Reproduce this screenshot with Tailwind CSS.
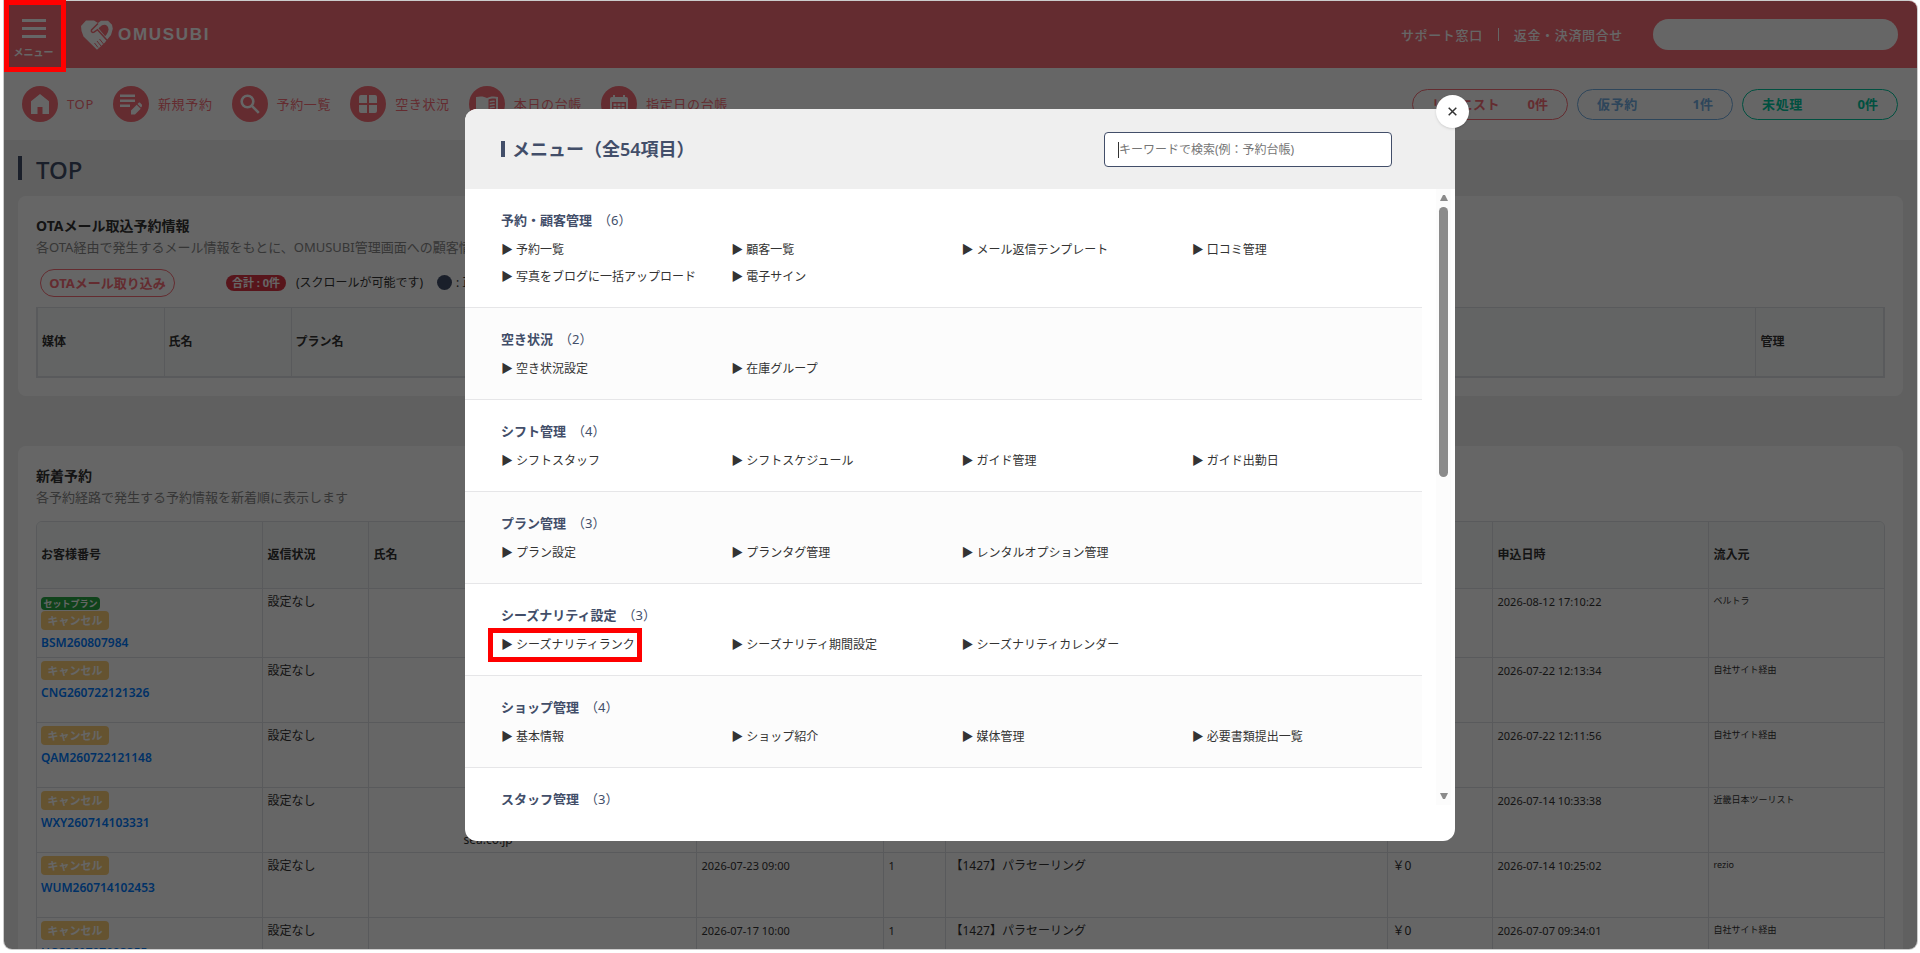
<!DOCTYPE html>
<html lang="ja">
  <head>
    <meta charset="utf-8" />
    <meta name="viewport" content="width=device-width, initial-scale=1" />
    <title>OMUSUBI | TOP</title>
    <script src="https://cdn.jsdelivr.net/npm/@tailwindcss/browser@4"></script>
  </head>
  <body
    class="h-screen overflow-hidden bg-white pt-px pr-[3px] pb-[4px] pl-[4px] font-['Noto_Sans','Noto_Sans_CJK_JP',sans-serif] text-[12px] leading-[18px] text-[#333]"
  >
    <div class="relative h-full overflow-hidden rounded-lg rounded-tl-none bg-[#f0f0f0] ring-1 ring-[#ccc]">
      <!-- header -->
      <header class="flex h-[67px] items-center bg-[#fa6e78] pr-[19px] text-white">
        <button type="button" class="flex w-[59px] flex-col items-center gap-[6px] pt-[8px]">
          <svg class="h-[20px] w-[24px]" viewBox="0 0 24 20" fill="currentColor">
            <path d="M0 0h24v3H0zM0 8h24v3H0zM0 16h24v3H0z" />
          </svg>
          <span class="text-[10px] leading-[14px] font-bold">メニュー</span>
        </button>
        <a href="#" class="ml-[18px] flex items-center gap-[5px]">
          <svg class="h-[30px] w-[32px]" viewBox="0 0 32 30" fill="none">
            <path
              fill="currentColor"
              d="M5 .5h8l4 2.500L20 .8h7l4 4 .8 4-1.800 6.200L25 21l-1 1.500L16 29.800 2.500 16.500.5 11 0 6z"
            />
            <path stroke="#fa6e78" stroke-width="1.500" d="M17 3.500 10.500 10c-.8 1.500 1 3.200 2.500 2.200l3.500-2.500 9.500 10.500" />
            <path fill="#fa6e78" d="M17.500 8.300 21 5.300c3-1.800 6.500.2 6.500 4 0 2.500-1.300 4.700-3.300 7z" />
            <path stroke="#fa6e78" stroke-width="1" d="m13.500 23 3.500 4.500M16 21l4 5M18.500 19l4 5" />
          </svg>
          <span class="font-['Liberation_Sans',sans-serif] text-[17px] leading-[20px] font-bold tracking-widest">OMUSUBI</span>
        </a>
        <nav class="ml-auto flex items-center text-[13px] font-medium tracking-wider">
          <a href="#">サポート窓口</a>
          <span class="mx-[15px] h-[13px] w-px bg-white"></span>
          <a href="#">返金・決済問合せ</a>
        </nav>
        <input type="search" aria-label="検索" class="ml-[30px] h-[31px] w-[245px] rounded-full bg-white px-4 text-[#333]" />
      </header>

      <!-- shortcuts -->
      <div class="flex h-[72px] items-center bg-white pr-[19px] pl-[18px] text-[13px] tracking-wider text-[#fa6e78]">
        <nav class="flex items-center gap-[19px]">
          <a href="#" class="flex items-center gap-[9px]">
            <span class="grid size-[36px] place-items-center rounded-full bg-[#fa6e78] text-white">
              <svg class="size-[20px]" viewBox="0 0 20 20" fill="currentColor">
                <path d="M10 0 1 7.300V20h6.500v-7h5v7H19V7.300z" />
              </svg>
            </span>
            TOP
          </a>
          <a href="#" class="flex items-center gap-[9px]">
            <span class="grid size-[36px] place-items-center rounded-full bg-[#fa6e78] text-white">
              <svg class="size-[22px]" viewBox="0 0 22 22" fill="currentColor">
                <path d="M0 1.500h15V4H0zM0 6.500h15V9H0zM0 11.500h10V14H0zM11 21.500v-4l5.700-5.700 4 4-5.700 5.700zM17.500 11l1.200-1.200c.4-.4 1-.4 1.400 0l2 2c.4.4.4 1 0 1.400L21 14.500z" />
              </svg>
            </span>
            新規予約
          </a>
          <a href="#" class="flex items-center gap-[9px]">
            <span class="grid size-[36px] place-items-center rounded-full bg-[#fa6e78] text-white">
              <svg class="size-[20px]" viewBox="0 0 20 20" fill="none" stroke="currentColor" stroke-width="2.600">
                <circle cx="7.500" cy="7.500" r="5.800" />
                <path d="m11.800 11.800 7 7" />
              </svg>
            </span>
            予約一覧
          </a>
          <a href="#" class="flex items-center gap-[9px]">
            <span class="grid size-[36px] place-items-center rounded-full bg-[#fa6e78] text-white">
              <svg class="size-[18px]" viewBox="0 0 18 18" fill="currentColor">
                <path d="M2 0h6v8H0V2a2 2 0 0 1 2-2zM10 0h6a2 2 0 0 1 2 2v6h-8zM0 10h8v8H2a2 2 0 0 1-2-2zM10 10h8v6a2 2 0 0 1-2 2h-6z" />
              </svg>
            </span>
            空き状況
          </a>
          <a href="#" class="flex items-center gap-[9px]">
            <span class="grid size-[36px] place-items-center rounded-full bg-[#fa6e78] text-white">
              <svg class="h-[17px] w-[22px]" viewBox="0 0 22 17" fill="currentColor">
                <path fill-rule="evenodd" d="M11 2C8.500.3 4 0 0 1v15c4-1 8-.7 11 1 3-1.700 7-2 11-1V1c-4-1-8.500-.7-11 1zm1.500 1.500c2-1 5-1.200 7.500-.8v11c-2.500-.4-5.500-.2-7.500.8z" />
                <path d="M13.700 5c1.500-.6 3.300-.7 5-.5V6c-1.700-.2-3.500-.1-5 .5zM13.700 8c1.500-.6 3.300-.7 5-.5V9c-1.700-.2-3.500-.1-5 .5zM13.700 11c1.500-.6 3.300-.7 5-.5V12c-1.700-.2-3.500-.1-5 .5z" />
              </svg>
            </span>
            本日の台帳
          </a>
          <a href="#" class="flex items-center gap-[9px]">
            <span class="grid size-[36px] place-items-center rounded-full bg-[#fa6e78] text-white">
              <svg class="size-[18px]" viewBox="0 0 18 18" fill="currentColor">
                <path fill-rule="evenodd" d="M3 0h2v2h8V0h2v2h1a2 2 0 0 1 2 2v12a2 2 0 0 1-2 2H2a2 2 0 0 1-2-2V4a2 2 0 0 1 2-2h1zM2 7v9h14V7z" />
                <path d="M3.500 8.500h3V11h-3zM7.500 8.500h3V11h-3zM11.500 8.500h3V11h-3zM3.500 12h3v2.500h-3zM7.500 12h3v2.500h-3zM11.500 12h3v2.500h-3z" />
              </svg>
            </span>
            指定日の台帳
          </a>
        </nav>
        <div class="ml-auto flex gap-[9px] font-bold">
          <a href="#" class="flex h-[31px] w-[156px] items-center justify-between rounded-full border border-current px-[19px]">
            <span>リクエスト</span><span class="tracking-normal">0件</span>
          </a>
          <a href="#" class="flex h-[31px] w-[156px] items-center justify-between rounded-full border border-current px-[19px] text-[#74aee3]">
            <span>仮予約</span><span class="tracking-normal">1件</span>
          </a>
          <a href="#" class="flex h-[31px] w-[156px] items-center justify-between rounded-full border border-current px-[19px] text-[#00c8a0]">
            <span>未処理</span><span class="tracking-normal">0件</span>
          </a>
        </div>
      </div>

      <main class="px-[14px]">
        <div class="flex h-[56px] items-center gap-[14px]">
          <span class="h-[24px] w-[4px] bg-[#424e69]"></span>
          <h1 class="pt-[4px] text-[24px] leading-[32px] font-medium text-[#424e69]">TOP</h1>
        </div>

        <!-- OTA mail -->
        <section class="h-[200px] rounded-lg bg-white px-[18px] pt-[20px]">
          <h2 class="text-[14px] leading-[20px] font-bold">OTAメール取込予約情報</h2>
          <p class="text-[13px] leading-[22px] text-[#888]">
            各OTA経由で発生するメール情報をもとに、OMUSUBI管理画面への顧客情報の取り込みを行います
          </p>
          <div class="flex h-[49px] items-center pl-[4px]">
            <button type="button" class="h-[28px] w-[135px] rounded-full border border-[#fa6e78] text-[13px] font-bold text-[#fa6e78]">
              OTAメール取り込み
            </button>
            <span class="ml-[51px] w-[60px] rounded-full bg-[#dc3545] text-center text-[11px] leading-[16px] font-bold text-white">合計 : 0件</span>
            <span class="ml-[10px] w-[141px]">(スクロールが可能です)</span>
            <span class="mr-[4px] size-[15px] rounded-full bg-[#424e69]"></span>
            <span>: 正常に取り込み</span>
          </div>
          <table class="w-full table-fixed border-2 border-t border-[#dee2e6] bg-[#f8f9fa] text-left">
            <thead>
              <tr class="h-[69px]">
                <th class="w-[127px] pl-[4px]">媒体</th>
                <th class="w-[127px] border-l border-[#dee2e6] pl-[4px]">氏名</th>
                <th class="border-l border-[#dee2e6] pl-[4px]">プラン名</th>
                <th class="w-[129px] border-l border-[#dee2e6] pl-[5px]">管理</th>
              </tr>
            </thead>
          </table>
        </section>

        <!-- new bookings -->
        <section class="mt-[50px] rounded-lg bg-white px-[18px] pt-[20px]">
          <h2 class="text-[14px] leading-[20px] font-bold">新着予約</h2>
          <p class="text-[13px] leading-[22px] text-[#888]">各予約経路で発生する予約情報を新着順に表示します</p>
          <div class="mt-[13px] overflow-hidden rounded-t-md border border-[#dee2e6]">
            <table class="w-full table-fixed text-left">
              <thead>
                <tr class="h-[66px] bg-[#f8f9fa]">
                  <th class="w-[225px] pl-[4px]">お客様番号</th>
                  <th class="w-[106px] border-l border-[#dee2e6] pl-[5px]">返信状況</th>
                  <th class="w-[328px] border-l border-[#dee2e6] pl-[5px]">氏名</th>
                  <th class="w-[187px] border-l border-[#dee2e6] pl-[5px]">予約日時</th>
                  <th class="w-[62px] border-l border-[#dee2e6] pl-[5px]">人数</th>
                  <th class="border-l border-[#dee2e6] pl-[5px]">プラン名</th>
                  <th class="w-[105px] border-l border-[#dee2e6] pl-[5px]">金額</th>
                  <th class="w-[216px] border-l border-[#dee2e6] pl-[5px]">申込日時</th>
                  <th class="w-[176px] border-l border-[#dee2e6] pl-[5px]">流入元</th>
                </tr>
              </thead>
              <tbody id="bookings"></tbody>
            </table>
          </div>
        </section>
      </main>

      <div class="absolute inset-0 bg-black/60"></div>
    </div>

    <!-- menu dialog -->
    <div
      role="dialog"
      aria-label="メニュー"
      class="absolute top-[109px] left-1/2 flex h-[732px] w-[990px] -translate-x-1/2 flex-col rounded-xl bg-white pb-[36px]"
    >
      <div class="flex h-[80px] shrink-0 items-center rounded-t-xl bg-[#efefef] pr-[63px] pl-[36px]">
        <span class="mr-[7px] h-[16px] w-[4px] bg-[#424e69]"></span>
        <h2 class="text-[18px] leading-[24px] font-semibold text-[#424e69]">メニュー（全54項目）</h2>
        <div class="relative ml-auto">
          <input
            type="text"
            aria-label="キーワード検索"
            placeholder="キーワードで検索(例：予約台帳)"
            class="block h-[35px] w-[288px] rounded-sm border border-[#424e69] bg-white px-[14px] outline-none placeholder:text-[#757575]"
          />
          <!-- text cursor -->
          <span class="absolute top-[10px] left-[14px] h-[16px] w-px bg-[#333]"></span>
        </div>
      </div>
      <div class="flex min-h-0 flex-1 pr-[4px]">
        <div id="menu" class="mr-[14px] flex-1 overflow-hidden"></div>
        <div class="flex w-[15px] flex-col items-center bg-[#fcfcfc] py-[6px] text-[#8b8b8b]">
          <svg class="h-[6px] w-[8px]" viewBox="0 0 8 6" fill="currentColor"><path d="M3 0h2l3 6H0z" /></svg>
          <span class="mt-[6px] h-[270px] w-[9px] rounded-full bg-[#8b8b8b]"></span>
          <svg class="mt-auto h-[6px] w-[8px]" viewBox="0 0 8 6" fill="currentColor"><path d="M0 0h8L5 6H3z" /></svg>
        </div>
      </div>
      <button
        type="button"
        aria-label="閉じる"
        class="absolute -top-[14px] -right-[14px] grid size-[33px] place-items-center rounded-full bg-white shadow-sm"
      >
        <svg class="size-[9px]" viewBox="0 0 9 9" fill="none" stroke="#333" stroke-width="1.500">
          <path d="m.7.7 7.600 7.600M8.300.7.7 8.300" />
        </svg>
      </button>
    </div>

    <!-- guide frames -->
    <div class="pointer-events-none absolute top-0 left-[4px] h-[72px] w-[62px] border-5 border-[#f00]"></div>

    <script>
      const sections = [
        { name: "予約・顧客管理", items: ["予約一覧", "顧客一覧", "メール返信テンプレート", "口コミ管理", "写真をブログに一括アップロード", "電子サイン"] },
        { name: "空き状況", items: ["空き状況設定", "在庫グループ"] },
        { name: "シフト管理", items: ["シフトスタッフ", "シフトスケジュール", "ガイド管理", "ガイド出勤日"] },
        { name: "プラン管理", items: ["プラン設定", "プランタグ管理", "レンタルオプション管理"] },
        { name: "シーズナリティ設定", items: ["シーズナリティランク", "シーズナリティ期間設定", "シーズナリティカレンダー"], marked: "シーズナリティランク" },
        { name: "ショップ管理", items: ["基本情報", "ショップ紹介", "媒体管理", "必要書類提出一覧"] },
        { name: "スタッフ管理", count: 3, items: [] },
      ];

      const bookings = [
        { id: "BSM260807984", set: true, applied: "2026-08-12 17:10:22", from: "ベルトラ" },
        { id: "CNG260722121326", applied: "2026-07-22 12:13:34", from: "自社サイト経由" },
        { id: "QAM260722121148", applied: "2026-07-22 12:11:56", from: "自社サイト経由" },
        { id: "WXY260714103331", mail: "sea.co.jp", applied: "2026-07-14 10:33:38", from: "近畿日本ツーリスト" },
        { id: "WUM260714102453", date: "2026-07-23 09:00", applied: "2026-07-14 10:25:02", from: "rezio" },
        { id: "UCC260707093355", date: "2026-07-17 10:00", applied: "2026-07-07 09:34:01", from: "自社サイト経由" },
      ];

      const menuItem = (label, marked) => `
        <li class="relative">
          <a href="#">▶ ${label}</a>
          ${marked ? `<span class="pointer-events-none absolute -top-[3px] -left-[13px] h-[34px] w-[154px] border-5 border-[#f00]"></span>` : ""}
        </li>`;

      document.getElementById("menu").innerHTML = sections
        .map(
          (s) => `
        <section class="border-b border-[#e6e6e8] pt-[22px] pb-[17px] pl-[36px] even:bg-[#fcfcfc] last:border-b-0">
          <h3 class="text-[13px] font-semibold text-[#424e69]">${s.name}<span class="ml-[6px] font-normal">（${s.count || s.items.length}）</span></h3>
          <ul class="mt-[7px] grid grid-cols-4 leading-[27px]">${s.items.map((i) => menuItem(i, i === s.marked)).join("")}</ul>
        </section>`
        )
        .join("");

      document.getElementById("bookings").innerHTML = bookings
        .map(
          (b) => `
        <tr class="h-[65px] border-t border-[#dee2e6] align-top">
          <td class="px-[4px] pt-[3px] pb-[5px]">
            ${b.set ? `<span class="mt-[5px] mb-px block w-[59px] rounded-sm bg-[#28a745] text-center text-[9px] leading-[13px] font-bold text-white">セットプラン</span>` : ""}
            <span class="block w-[68px] rounded-sm bg-[#fccf78] text-center text-[11px] leading-[19px] font-bold text-white">キャンセル</span>
            <a href="#" class="mt-[4px] block leading-[18px] font-semibold text-[#007bff]">${b.id}</a>
          </td>
          <td class="border-l border-[#dee2e6] px-[5px] pt-[4px]">設定なし</td>
          <td class="border-l border-[#dee2e6]">${b.mail ? `<div class="pt-[43px] pl-[95px]">${b.mail}</div>` : ""}</td>
          <td class="border-l border-[#dee2e6] px-[5px] pt-[4px] text-[11px]">${b.date || ""}</td>
          <td class="border-l border-[#dee2e6] px-[5px] pt-[4px] text-[11px]">1</td>
          <td class="border-l border-[#dee2e6] px-[5px] pt-[4px]">【1427】パラセーリング</td>
          <td class="border-l border-[#dee2e6] px-[5px] pt-[4px]">￥0</td>
          <td class="border-l border-[#dee2e6] px-[5px] pt-[4px] text-[11px]">${b.applied}</td>
          <td class="border-l border-[#dee2e6] px-[5px] pt-[3px] text-[9px]">${b.from}</td>
        </tr>`
        )
        .join("");
    </script>
  </body>
</html>
